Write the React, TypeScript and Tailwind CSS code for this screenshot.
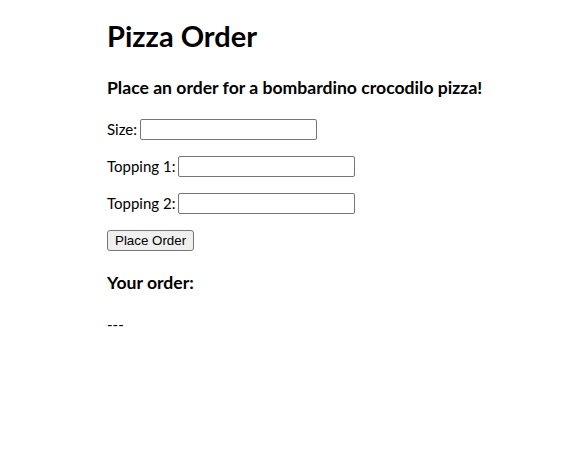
import React, { useState } from 'react';

const Row: React.FC<{ label: string; value: string; onChange: (v: string) => void }> = ({ label, value, onChange }) => (
    <div className="flex items-center h-[21px] mb-[16px]">
        <span className="mr-[3px]">{label}</span>
        <input
            value={value}
            onChange={(e) => onChange(e.target.value)}
            className="w-[177px] h-[21px] border border-[#767676] rounded-[2px] bg-white px-[2px] outline-none text-[13px]"
        />
    </div>
);

const App: React.FC = () => {
    const [size, setSize] = useState('');
    const [topping1, setTopping1] = useState('');
    const [topping2, setTopping2] = useState('');
    const [order, setOrder] = useState('---');

    const placeOrder = () => {
        setOrder(`${size} ${topping1} ${topping2}`.trim() || '---');
    };

    return (
        <div className="min-h-screen bg-white text-black font-['Lato','Liberation_Sans',sans-serif] text-[15px] pl-[107px] pt-[19px]">
            <h1 className="text-[29px] font-bold leading-[34px]">Pizza Order</h1>
            <h3 className="text-[17.6px] font-bold leading-[22px] mt-[24px]">Place an order for a bombardino crocodilo pizza!</h3>
            <div className="mt-[20px]">
                <Row label="Size:" value={size} onChange={setSize} />
                <Row label="Topping 1:" value={topping1} onChange={setTopping1} />
                <Row label="Topping 2:" value={topping2} onChange={setTopping2} />
            </div>
            <div className="flex h-[21px]">
                <button
                    onClick={placeOrder}
                    className="h-[21px] px-[7px] bg-[#efefef] border border-[#767676] rounded-[3px] text-[13.33px] leading-none font-['Liberation_Sans',Arial,sans-serif]"
                >
                    Place Order
                </button>
            </div>
            <h3 className="text-[17.6px] font-bold leading-[22px] mt-[21px]">Your order:</h3>
            <p className="mt-[19px]">{order}</p>
        </div>
    );
};

export default App;
